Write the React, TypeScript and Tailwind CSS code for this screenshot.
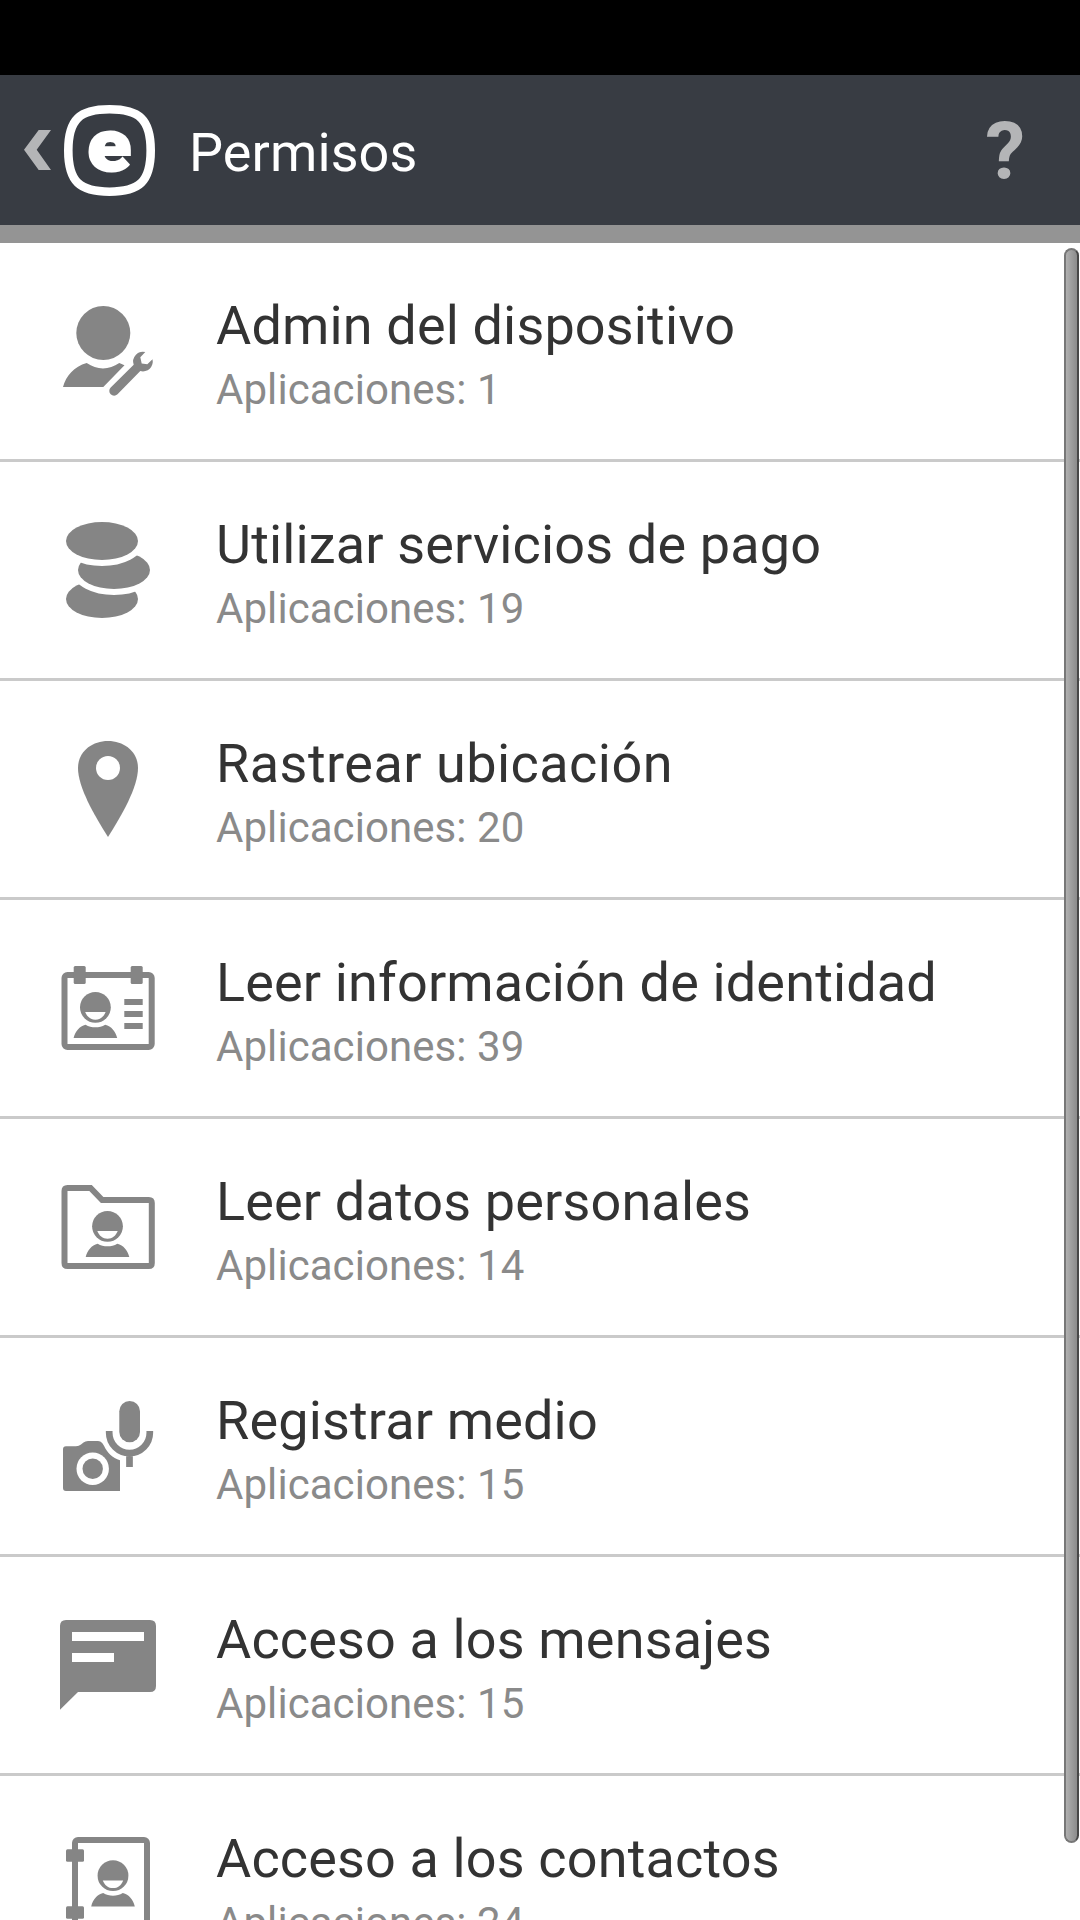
import type { ReactNode } from "react";

type Permission = {
  title: string;
  count: number;
  icon: ReactNode;
  tracking?: string;
};

function Person({ x, y }: { x: number; y: number }) {
  return (
    <g transform={`translate(${x} ${y})`}>
      <circle r="15.4" />
      <path d="M-10.2 4.7H10.2C8.6 9.2 4.8 12.4 0 12.4S-8.6 9.2-10.2 4.7Z" fill="#fff" />
      <path d="M-21.8 30.7C-20 24-16 18.8-9.8 17.4C-4 20.9 4 20.9 9.8 17.4C16 18.8 20 24 21.8 30.7Z" />
    </g>
  );
}

const adminIcon = (
  <>
    <circle cx="49.3" cy="36" r="27" />
    <path d="M9 90C12 79 20 69.5 32.7 66C43 73.2 55 73.2 65.3 66L70.5 68.3L49.3 90Z" />
    <path d="M91.3 55L86.3 60.3L87.7 66.5L93.3 67.3L98.5 62.3A9.8 9.8 0 0 1 86.3 74L63.5 97.3A4.8 4.8 0 0 1 56.7 90.5L79.7 67.7A9.8 9.8 0 0 1 91.3 55Z" />
  </>
);

const coinsIcon = (
  <g stroke="#fff" strokeWidth="12" style={{ paintOrder: "stroke" }}>
    <ellipse cx="48" cy="83" rx="36" ry="19" />
    <ellipse cx="60" cy="54" rx="36" ry="19" />
    <ellipse cx="48" cy="25" rx="36" ry="19" />
  </g>
);

const pinIcon = (
  <>
    <path d="M54 6C37.4 6 24 17 24 33C24 52 40 80 54 102C68 80 84 52 84 33C84 17 70.6 6 54 6Z" />
    <circle cx="54" cy="33" r="12" fill="#fff" />
  </>
);

const identityIcon = (
  <>
    <rect x="10.5" y="21" width="87.2" height="72" rx="3" fill="none" stroke="#858585" strokeWidth="6" />
    <rect x="19.7" y="12" width="12" height="18" rx="1.5" />
    <rect x="76.7" y="12" width="12" height="18" rx="1.5" />
    <path d="M70.3 45h18.4v6H70.3ZM70.3 57h18.4v6H70.3ZM70.3 69h18.4v6H70.3Z" />
    <Person x={41.4} y={53.3} />
  </>
);

const folderIcon = (
  <>
    <path
      d="M13.5 15H36.5L48.2 27H94.8Q97.8 27 97.8 30V90Q97.8 93 94.8 93H13.5Q10.5 93 10.5 90V18Q10.5 15 13.5 15Z"
      fill="none"
      stroke="#858585"
      strokeWidth="6"
    />
    <Person x={53.5} y={53.3} />
  </>
);

const mediaIcon = (
  <>
    <path d="M12 54.3H22Q25 54.3 27 52.6L29.5 50.5Q31.3 49 34 49H44Q46.5 49 48.2 51L50 53.7C53 60.5 58.5 65.8 66 68.3V99H12Q9 99 9 96V57.3Q9 54.3 12 54.3Z" />
    <circle cx="38.7" cy="76.7" r="16.2" fill="#fff" />
    <circle cx="38.7" cy="76.7" r="10.2" />
    <rect x="65.3" y="9" width="20.7" height="41.3" rx="10.35" />
    <path d="M55.2 39V40.7A20.3 20.3 0 0 0 95.8 40.7V39M75.5 61V75" fill="none" stroke="#858585" strokeWidth="6.7" />
  </>
);

const messageIcon = (
  <>
    <path d="M12 9H96Q102 9 102 15V75Q102 81 96 81H24L6 98.7V15Q6 9 12 9Z" />
    <path d="M18 21H90V30H18ZM18 42H60V51H18Z" fill="#fff" />
  </>
);

const contactsIcon = (
  <>
    <rect x="21" y="10" width="72" height="88" rx="3" fill="none" stroke="#858585" strokeWidth="6" />
    <rect x="12" y="19.3" width="18" height="12.4" rx="1.5" />
    <rect x="12" y="76.3" width="18" height="12.4" rx="1.5" />
    <Person x={59} y={45.7} />
  </>
);

const permissions: Permission[] = [
  { title: "Admin del dispositivo", count: 1, icon: adminIcon },
  { title: "Utilizar servicios de pago", count: 19, icon: coinsIcon },
  { title: "Rastrear ubicación", count: 20, icon: pinIcon, tracking: "tracking-[0.47px]" },
  { title: "Leer información de identidad", count: 39, icon: identityIcon },
  { title: "Leer datos personales", count: 14, icon: folderIcon },
  { title: "Registrar medio", count: 15, icon: mediaIcon },
  { title: "Acceso a los mensajes", count: 15, icon: messageIcon },
  { title: "Acceso a los contactos", count: 24, icon: contactsIcon },
];

function Header() {
  return (
    <header className="flex h-[150px] shrink-0 items-center bg-[#383c43] pr-[55px] pl-6">
      <svg className="h-10 w-[27px]" viewBox="0 0 27 40" fill="#b4b5b7">
        <path d="M0 19.8L14.7 0H27L12.7 19.8L27 40H14.7Z" />
      </svg>
      <svg className="ml-[13px] h-[91px] w-[91px] overflow-visible" viewBox="0 0 91 91">
        <path
          d="M45.5 4.3C75 4.3 86.7 14 86.7 45.5S75 86.7 45.5 86.7S4.3 77 4.3 45.5S16 4.3 45.5 4.3Z"
          fill="none"
          stroke="#fff"
          strokeWidth="8.6"
        />
        <text
          transform="translate(45.3 66.2) scale(1.08 1)"
          textAnchor="middle"
          className="fill-white stroke-white stroke-2 font-['Roboto',sans-serif] text-[75px] font-black"
        >
          e
        </text>
      </svg>
      <h1 className="ml-[34px] pt-[5px] text-[54px] leading-[64px] tracking-[0.1px] text-white">Permisos</h1>
      <span className="ml-auto pt-[3px] text-[80px] leading-[80px] font-bold text-[#b4b5b7]">?</span>
    </header>
  );
}

function PermissionRow({ title, count, icon, tracking = "tracking-[0.15px]" }: Permission) {
  return (
    <li className="flex h-[219px] shrink-0 items-center border-b-3 border-[#cacaca] pl-[54px]">
      <svg className="size-[108px] shrink-0" viewBox="0 0 108 108" fill="#858585">
        {icon}
      </svg>
      <div className="ml-[54px] pt-1.5 whitespace-nowrap">
        <p className={`text-[54px] leading-[64px] text-[#333333] ${tracking}`}>{title}</p>
        <p className="mt-[7px] text-[42px] leading-[50px] tracking-[0.06px] text-[#8a8a8a]">
          Aplicaciones: {count}
        </p>
      </div>
    </li>
  );
}

export default function App() {
  return (
    <div className="flex h-[1920px] w-[1080px] flex-col overflow-hidden bg-white font-['Roboto',sans-serif]">
      <div className="h-[75px] shrink-0 bg-black" />
      <Header />
      <div className="h-[18px] shrink-0 bg-[#949494]" />
      <main className="relative min-h-0 flex-1 overflow-hidden">
        <ul className="flex flex-col">
          {permissions.map((permission) => (
            <PermissionRow key={permission.title} {...permission} />
          ))}
        </ul>
        <div className="absolute top-[5px] right-[1px] h-[1595px] w-[15px] rounded-full border-2 border-[#777777] border-r-[#484848] bg-linear-to-r from-[#b0b0b0] to-[#8c8c8c]" />
      </main>
    </div>
  );
}
